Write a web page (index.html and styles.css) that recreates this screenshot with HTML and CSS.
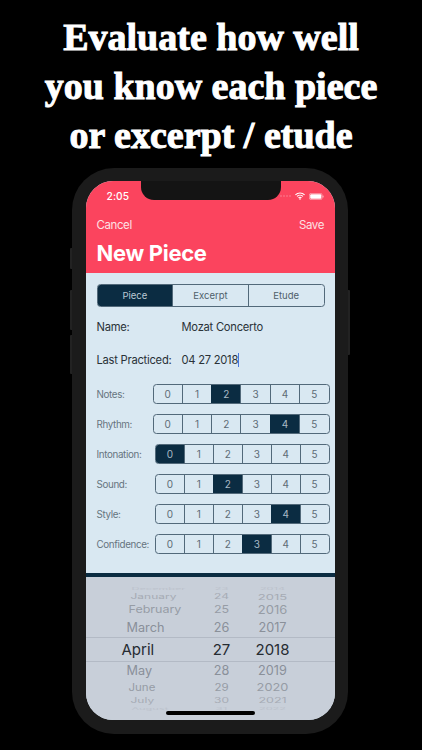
FILE: index.html
```html
<!DOCTYPE html>
<html lang="en">
<head>
<meta charset="utf-8">
<title>New Piece</title>
<link rel="stylesheet" href="styles.css">
</head>
<body>
<h1 class="headline">Evaluate how well<br>you know each piece<br>or excerpt / etude</h1>
<div class="phone">
  <span class="btn btn-mute"></span>
  <span class="btn btn-up"></span>
  <span class="btn btn-down"></span>
  <span class="btn btn-power"></span>
  <div class="screen">
    <div class="notch"></div>
    <header class="head">
      <div class="status">
        <span class="time">2:05</span>
        <span class="status-icons">
          <svg class="signal" width="11" height="2" viewBox="0 0 11 2"><g fill="#fff" opacity=".35"><circle cx="1" cy="1" r=".8"/><circle cx="4" cy="1" r=".8"/><circle cx="7" cy="1" r=".8"/><circle cx="10" cy="1" r=".8"/></g></svg>
          <svg width="10" height="8" viewBox="0 0 10 8"><path d="M.4 2.8a6.6 6.6 0 0 1 9.2 0M2 4.4a4.3 4.3 0 0 1 6 0M3.5 5.9a2.1 2.1 0 0 1 3 0" fill="none" stroke="#fff" stroke-width="1.1"/><path d="M5 8 3.9 6.8a1.6 1.6 0 0 1 2.2 0z" fill="#fff"/></svg>
          <svg width="15" height="7" viewBox="0 0 15 7"><rect x=".4" y=".4" width="12.7" height="6.2" rx="1.6" fill="none" stroke="#fff" stroke-opacity=".6" stroke-width=".7"/><rect x="1.2" y="1.2" width="11.1" height="4.6" rx="1" fill="#fff"/><rect x="13.6" y="2.4" width="1" height="2.2" rx=".5" fill="#fff" opacity=".6"/></svg>
        </span>
      </div>
      <div class="nav"><span>Cancel</span><span>Save</span></div>
      <div class="title">New Piece</div>
    </header>
    <main class="form">
      <div class="seg type">
        <span class="on">Piece</span><span>Excerpt</span><span>Etude</span>
      </div>
      <div class="field name"><span class="field-label">Name:</span><span>Mozat Concerto</span></div>
      <div class="field date"><span class="field-label">Last Practiced:</span><span class="caret">04 27 2018</span></div>
      <div class="ratings">
        <div class="rating"><span class="rate-label">Notes:</span><div class="seg score wide"><span>0</span><span>1</span><span class="on">2</span><span>3</span><span>4</span><span>5</span></div></div>
        <div class="rating"><span class="rate-label">Rhythm:</span><div class="seg score wide"><span>0</span><span>1</span><span>2</span><span>3</span><span class="on">4</span><span>5</span></div></div>
        <div class="rating"><span class="rate-label">Intonation:</span><div class="seg score"><span class="on">0</span><span>1</span><span>2</span><span>3</span><span>4</span><span>5</span></div></div>
        <div class="rating"><span class="rate-label">Sound:</span><div class="seg score"><span>0</span><span>1</span><span class="on">2</span><span>3</span><span>4</span><span>5</span></div></div>
        <div class="rating"><span class="rate-label">Style:</span><div class="seg score"><span>0</span><span>1</span><span>2</span><span>3</span><span class="on">4</span><span>5</span></div></div>
        <div class="rating"><span class="rate-label">Confidence:</span><div class="seg score"><span>0</span><span>1</span><span>2</span><span class="on">3</span><span>4</span><span>5</span></div></div>
      </div>
    </main>
    <section class="picker">
      <div class="wheel w0"><span class="m">December</span><span class="d">23</span><span class="y">2014</span></div>
      <div class="wheel w1"><span class="m">January</span><span class="d">24</span><span class="y">2015</span></div>
      <div class="wheel w2"><span class="m">February</span><span class="d">25</span><span class="y">2016</span></div>
      <div class="wheel w3"><span class="m">March</span><span class="d">26</span><span class="y">2017</span></div>
      <div class="wheel w4"><span class="m">April</span><span class="d">27</span><span class="y">2018</span></div>
      <div class="wheel w5"><span class="m">May</span><span class="d">28</span><span class="y">2019</span></div>
      <div class="wheel w6"><span class="m">June</span><span class="d">29</span><span class="y">2020</span></div>
      <div class="wheel w7"><span class="m">July</span><span class="d">30</span><span class="y">2021</span></div>
      <div class="wheel w8"><span class="m">August</span><span class="d">31</span><span class="y">2022</span></div>
      <div class="home"></div>
    </section>
  </div>
</div>
</body>
</html>
```
FILE: styles.css
```css
* { box-sizing: border-box; }
html, body { margin: 0; height: 750px; overflow: hidden; background: #000; }
body { font-family: Inter, "Liberation Sans", sans-serif; }

.headline {
  margin: 0;
  padding-top: 13px;
  height: 168px;
  color: #fff;
  text-align: center;
  font-family: "Liberation Serif", serif;
  font-weight: 700;
  font-size: 38px;
  line-height: 49px;
  -webkit-text-stroke: 1px #fff;
}

.phone {
  position: relative;
  width: 276px;
  height: 566px;
  margin-left: 72px;
  padding: 13px 13px 14px 13.5px;
  border-radius: 42px;
  background: #1b1b1b;
}
.btn { position: absolute; width: 2px; background: #222; }
.btn-mute { left: -2px; top: 80px; height: 21px; border-radius: 1px 0 0 1px; }
.btn-up { left: -2px; top: 122px; height: 40px; border-radius: 1px 0 0 1px; }
.btn-down { left: -2px; top: 167px; height: 39px; border-radius: 1px 0 0 1px; }
.btn-power { right: -2px; top: 122px; height: 65px; border-radius: 0 1px 1px 0; }

.screen {
  position: relative;
  display: flex;
  flex-direction: column;
  height: 539px;
  overflow: hidden;
  border-radius: 27px;
  background: #d9e8f2;
}
.notch {
  position: absolute;
  top: 0;
  left: 55px;
  width: 140px;
  height: 19px;
  border-radius: 0 0 13px 13px;
  background: #141414;
}

.head { height: 92px; flex: none; padding: 9px 11px 0; background: #fb445e; color: #fff; }
.status { display: flex; justify-content: space-between; align-items: center; height: 12px; padding: 0 0 0 10px; }
.time { font-size: 10.2px; font-weight: 500; letter-spacing: .1px; }
.status-icons { display: flex; align-items: center; gap: 4px; }
.nav { display: flex; justify-content: space-between; margin-top: 16px; font-size: 11.5px; line-height: 14px; letter-spacing: -.4px; color: #fde0e4; }
.title { margin-top: 8px; font-size: 22px; line-height: 27px; font-weight: 700; letter-spacing: -.3px; }

.form { flex: 1; padding: 11px 5.5px 0 11px; }
.seg { display: flex; border: 1.3px solid #52697a; border-radius: 3.5px; overflow: hidden; color: #4f5f6b; }
.seg span { flex: 1; display: flex; align-items: center; justify-content: center; border-left: 1.3px solid #52697a; }
.seg span:first-child { border-left: 0; }
.seg .on { background: #0b2c42; color: #b9c8d3; border-left-color: #0b2c42; }
.type { width: 228px; height: 23px; font-size: 9.5px; }
.field { display: flex; align-items: center; height: 16px; font-size: 11.2px; letter-spacing: -.25px; color: #2a3238; }
.field-label { width: 85px; flex: none; }
.name { margin-top: 12px; }
.date { margin-top: 17px; }
.caret { border-right: 1px solid #4a78e0; line-height: 14px; }
.ratings { display: flex; flex-direction: column; gap: 10px; margin-top: 16px; }
.rating { display: flex; justify-content: space-between; align-items: center; height: 20px; }
.rate-label { font-size: 9.8px; letter-spacing: -.35px; color: #66747e; }
.score { width: 174.5px; height: 20px; font-size: 10px; color: #5d6b75; }
.score.wide { width: 177px; }
.score .on { color: #a9bac6; }

.picker {
  position: relative;
  flex: none;
  height: 147px;
  padding-top: 8px;
  border-top: 4px solid #0b2c42;
  background: #c8cfd9;
  color: #8a9099;
}
.wheel { display: grid; grid-template-columns: 120px 32px 70px; align-items: center; white-space: nowrap; }
.wheel .d, .wheel .y { text-align: center; }
.wheel span { display: block; }
.w0, .w8 { height: 8px; line-height: 8px; font-size: 11px; color: #bcc2cc; }
.w0 span, .w8 span { transform: scaleY(.3); }
.w0 .m { padding-left: 46px; }
.w8 .m { padding-left: 46px; }
.w1, .w7 { height: 8px; line-height: 8px; font-size: 12px; color: #a6abb4; }
.w1 span, .w7 span { transform: scaleY(.6); }
.w1 .m, .w7 .m { padding-left: 45px; }
.w1 .y { font-size: 13px; }
.w7 .y { font-size: 12.5px; }
.w2 { height: 16px; line-height: 16px; margin-top: 1px; font-size: 12.5px; color: #969ca5; }
.w2 span { transform: scaleY(.85); }
.w2 .m { padding-left: 43px; }
.w2 .y { font-size: 13px; }
.w3 { height: 18px; line-height: 18px; margin-top: 1px; font-size: 12.7px; }
.w3 .m { padding-left: 41px; }
.w4 {
  height: 25px;
  line-height: 23px;
  font-size: 15px;
  color: #262b31;
  border-top: 1px solid #b3bac5;
  border-bottom: 1px solid #b3bac5;
}
.w4 .m { padding-left: 36px; }
.w5 { height: 18px; line-height: 18px; font-size: 12.7px; }
.w5 .m { padding-left: 41px; }
.w6 { height: 16px; line-height: 16px; font-size: 11.5px; color: #969ca5; }
.w6 span { transform: scaleY(.85); }
.w6 .m { padding-left: 43px; }
.w6 .y { font-size: 12.8px; }
.w7 { margin-top: 1px; }
.home {
  position: absolute;
  left: 80.5px;
  bottom: 5px;
  width: 89px;
  height: 4px;
  border-radius: 2px;
  background: #000;
}
```
